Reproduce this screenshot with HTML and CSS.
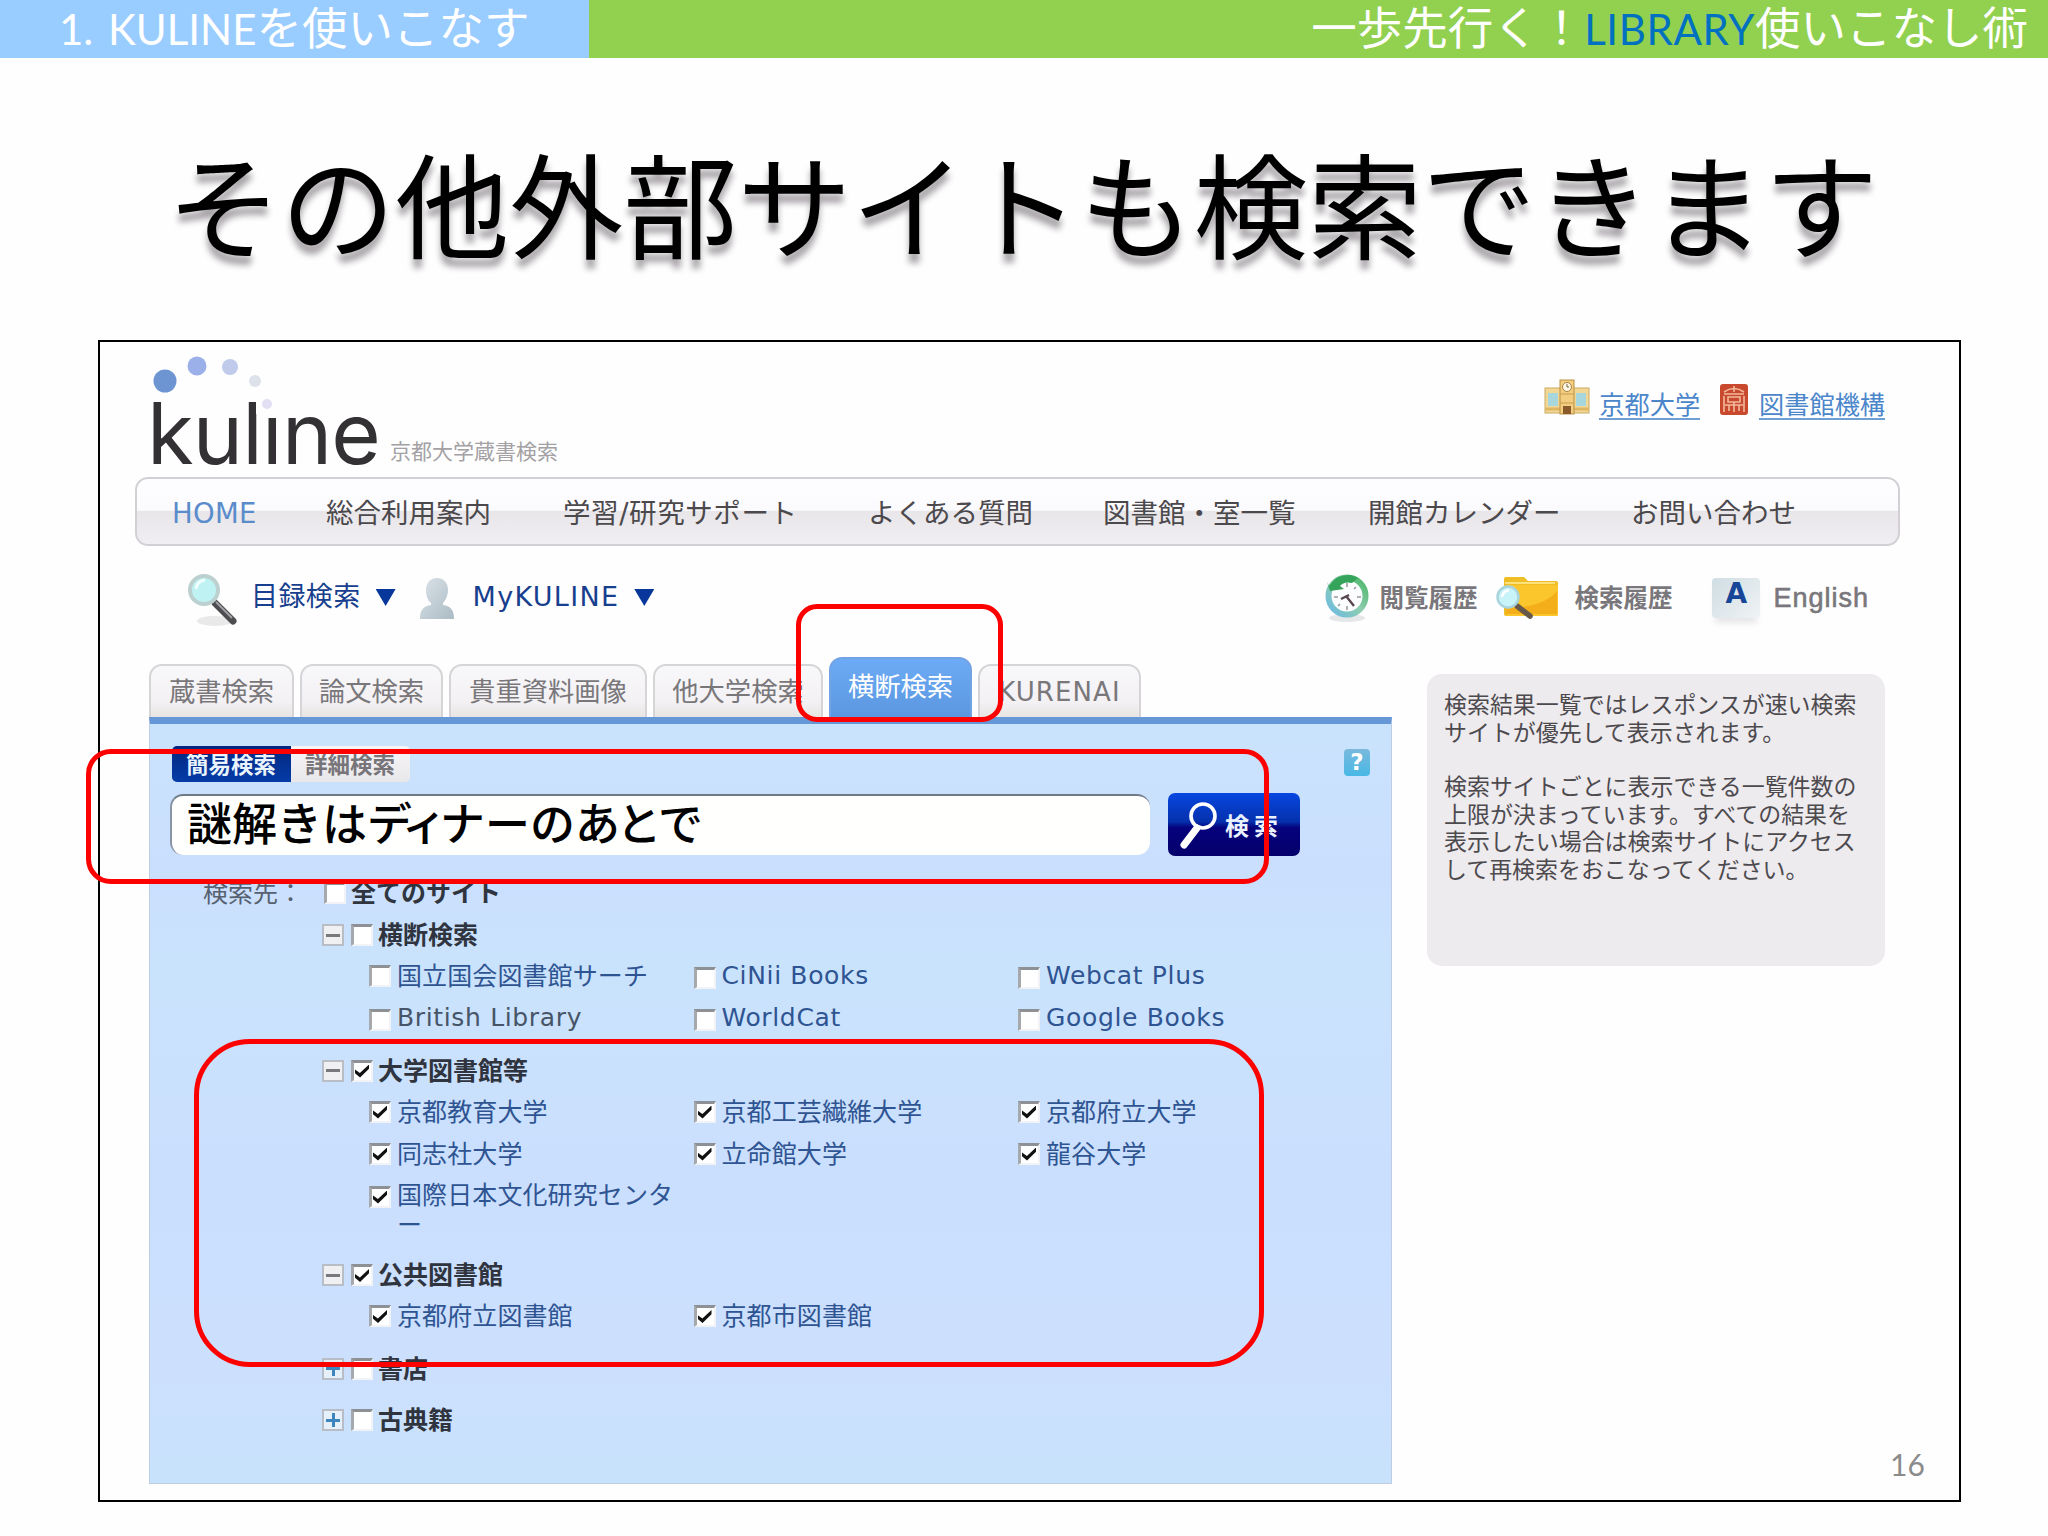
FILE: index.html
```html
<!DOCTYPE html>
<html lang="ja">
<head>
<meta charset="utf-8">
<title>KULINEを使いこなす</title>
<link rel="stylesheet" href="styles.css">
</head>
<body>
<div class="slide">
  <header class="bar">
    <div class="bar-chapter"><span class="latin chapter-latin">1. KULINE</span>を使いこなす</div>
    <div class="bar-series">一歩先行く！<span class="latin series-latin">LIBRARY</span>使いこなし術</div>
  </header>
  <h1 class="title">その他外部サイトも検索できます</h1>

  <main class="frame">
    <div class="brand">
      <div class="logo">
        <span class="logo-text">kuline</span>
        <svg class="logo-dots" width="134" height="70" viewBox="0 0 134 70">
          <rect x="104" y="36" width="28" height="24" fill="#fefefe"/>
          <circle cx="13" cy="27" r="11.5" fill="#6c95d2"/>
          <circle cx="45" cy="12" r="9.5" fill="#9bb0e8"/>
          <circle cx="78" cy="13" r="8" fill="#c0cbec"/>
          <circle cx="103" cy="27" r="6" fill="#dde1ea"/>
          <circle cx="115" cy="50" r="5" fill="#e2dff4"/>
        </svg>
      </div>
      <span class="tagline">京都大学蔵書検索</span>
      <div class="links">
        <svg width="46" height="36" viewBox="0 0 46 36">
          <rect x="1" y="9" width="44" height="25" fill="#f2d795" stroke="#c9a963"/>
          <rect x="4" y="14" width="10" height="13" fill="#a7d7dc"/><rect x="32" y="14" width="10" height="13" fill="#a7d7dc"/>
          <path d="M1 30h44" stroke="#dfb764" stroke-width="3"/>
          <rect x="16" y="1" width="14" height="34" fill="#f3cd80" stroke="#b98f45"/>
          <circle cx="23" cy="8" r="4.500" fill="#fff8e2" stroke="#a98445"/><path d="M23 5v3h2" stroke="#765" fill="none"/>
          <path d="M16 15h14M16 24h14" stroke="#c99c50"/><rect x="19" y="27" width="8" height="8" fill="#8b5a2b"/>
        </svg>
        <a class="link-univ">京都大学</a>
        <svg class="seal" width="28" height="31" viewBox="0 0 28 31">
          <rect width="28" height="31" rx="3" fill="#c9492f"/>
          <path d="M4 8q10-7 20 0M14 2v6M4 10h20M8 13h12v5H8zM5 21h18M14 18v10M9 21v6M19 21v6M4 12v16M24 12v16" fill="none" stroke="#f3b99c" stroke-width="1.600"/>
        </svg>
        <a>図書館機構</a>
      </div>
    </div>

    <nav class="nav">
      <span class="current">HOME</span><span>総合利用案内</span><span class="support">学習/研究サポート</span><span>よくある質問</span><span>図書館・室一覧</span><span>開館カレンダー</span><span>お問い合わせ</span>
    </nav>

    <div class="tools">
      <svg class="ic-search" width="50" height="56" viewBox="0 0 50 56">
        <ellipse cx="28" cy="50" rx="18" ry="5" fill="#e9e9ea"/>
        <path d="M28 32L46 50" stroke="#4d4d50" stroke-width="7" stroke-linecap="round"/><path d="M29 31L45 47" stroke="#a2a2a6" stroke-width="2"/>
        <circle cx="17" cy="19" r="14" fill="#bff2f2" stroke="#bcd0cf" stroke-width="4"/><path d="M9 18q1-8 9-9" stroke="#effffe" stroke-width="3" fill="none"/>
      </svg>
      <span class="tool-link t-catalog">目録検索</span><i class="tri"></i>
      <svg class="ic-user" width="36" height="44" viewBox="0 0 36 44">
        <defs><linearGradient id="person" x1="0" y1="0" x2="1" y2="1"><stop offset="0" stop-color="#dbe3e8"/><stop offset="1" stop-color="#abbbc4"/></linearGradient></defs>
        <path d="M18 1c7 0 11 5 11 12 0 6-3 11-5 13v2c7 1 11 4 11 14H1c0-10 4-13 11-14v-2C9 24 7 19 7 13 7 6 11 1 18 1z" fill="url(#person)"/>
      </svg>
      <span class="tool-link t-my">MyKULINE</span><i class="tri"></i>

      <div class="history">
        <svg class="ic-clock" width="46" height="50" viewBox="0 0 46 50">
          <defs><linearGradient id="ring" x1="1" y1="0" x2="0" y2="1"><stop offset="0" stop-color="#49b565"/><stop offset=".5" stop-color="#8fceb0"/><stop offset="1" stop-color="#6ab9e4"/></linearGradient></defs>
          <ellipse cx="23" cy="44" rx="18" ry="4" fill="#e5e7e9"/>
          <circle cx="23" cy="22" r="18.5" fill="#fbfdff" stroke="url(#ring)" stroke-width="6"/>
          <path d="M5 12Q12 0 27 1l7 3-6 5q-8-2-12 3l4 3-14 2-3-9z" fill="#35a35a"/>
          <path d="M23 9v4M23 32v4M10 23h4M33 23h4M14 32l2-2M32 13l-2 2" stroke="#999" stroke-width="1.500"/>
          <path d="M17 25l8-4M22 22l8 10" fill="none" stroke="#5b4750" stroke-width="2.400"/>
        </svg>
        <span class="h-view">閲覧履歴</span>
        <svg class="ic-folder" width="64" height="46" viewBox="0 0 64 46">
          <path d="M9 3q0-2 2-2h18l4 4h28q2 0 2 2v31q0 2-2 2H11q-2 0-2-2z" fill="#efbd25"/>
          <path d="M11 9h52v29q0 2-2 2H11z" fill="#fbc62c"/><path d="M11 32Q48 32 62 15v23H11z" fill="#f3ae19"/><path d="M10 7h50" stroke="#fde27b" stroke-width="2"/>
          <path d="M22 30l13 10" stroke="#66584b" stroke-width="5.500" stroke-linecap="round"/>
          <circle cx="13" cy="21" r="10.5" fill="#c8f3f8" stroke="#a9d4dd" stroke-width="2.500"/><path d="M7 21q1-6 7-7" stroke="#fff" stroke-width="2.500" fill="none"/>
        </svg>
        <span class="h-search">検索履歴</span>
        <span class="lang-icon">A</span>
        <span class="h-lang">English</span>
      </div>
    </div>

    <div class="columns">
      <section class="search">
        <div class="tabs">
          <span class="tab tab-1">蔵書検索</span><span class="tab tab-2">論文検索</span><span class="tab tab-3">貴重資料画像</span><span class="tab tab-4">他大学検索</span><span class="tab tab-5 active">横断検索</span><span class="tab tab-6">KURENAI</span>
        </div>
        <div class="panel">
          <div class="modes">
            <span class="mode on">簡易検索</span><span class="mode">詳細検索</span><span class="help">?</span>
          </div>
          <div class="query">
            <div class="field">謎解きは<span class="narrow">ディ</span>ナーの<span class="tight">あと</span>で</div>
            <div class="submit">
              <svg width="40" height="50" viewBox="0 0 40 50"><circle cx="25" cy="15" r="12" fill="none" stroke="#fff" stroke-width="3.600"/><path d="M19 27L6 44" stroke="#fff" stroke-width="7" stroke-linecap="round"/></svg>
              <span>検索</span>
            </div>
          </div>

          <div class="targets">
            <div class="all"><span class="caption">検索先：</span><i class="box"></i><b>全てのサイト</b></div>
            <div class="group">
              <div class="head"><i class="fold minus"></i><i class="box"></i><b>横断検索</b></div>
              <div class="sites">
                <span><i class="box"></i>国立国会図書館サーチ</span><span class="en"><i class="box"></i>CiNii Books</span><span class="en"><i class="box"></i>Webcat Plus</span>
                <span class="en plain"><i class="box"></i>British Library</span><span class="en"><i class="box"></i>WorldCat</span><span class="en"><i class="box"></i>Google Books</span>
              </div>
            </div>
            <div class="group">
              <div class="head"><i class="fold minus"></i><i class="box checked"></i><b>大学図書館等</b></div>
              <div class="sites">
                <span><i class="box checked"></i>京都教育大学</span><span><i class="box checked"></i>京都工芸繊維大学</span><span><i class="box checked"></i>京都府立大学</span>
                <span><i class="box checked"></i>同志社大学</span><span><i class="box checked"></i>立命館大学</span><span><i class="box checked"></i>龍谷大学</span>
                <span class="long"><i class="box checked"></i><span>国際日本文化研究センタ<br>ー</span></span>
              </div>
            </div>
            <div class="group">
              <div class="head"><i class="fold minus"></i><i class="box checked"></i><b>公共図書館</b></div>
              <div class="sites">
                <span><i class="box checked"></i>京都府立図書館</span><span><i class="box checked"></i>京都市図書館</span>
              </div>
            </div>
            <div class="group"><div class="head"><i class="fold plus"></i><i class="box"></i><b>書店</b></div></div>
            <div class="group"><div class="head"><i class="fold plus"></i><i class="box"></i><b>古典籍</b></div></div>
          </div>
        </div>
      </section>

      <aside class="side">
        <div class="note">
          <p>検索結果一覧ではレスポンスが速い検索<br>サイトが優先して表示されます。</p>
          <p>検索サイトごとに表示できる一覧件数の<br>上限が決まっています。すべての結果を<br>表示したい場合は検索サイトにアクセス<br>して再検索をおこなってください。</p>
        </div>
        <span class="page-number">16</span>
      </aside>
    </div>
  </main>

  <div class="callout callout-tab"></div>
  <div class="callout callout-query"></div>
  <div class="callout callout-sites"></div>
</div>
</body>
</html>
```
FILE: styles.css
```css
* { box-sizing: border-box; }
body { margin: 0; }
i { font-style: normal; }

.slide {
  position: relative;
  width: 2048px;
  height: 1536px;
  overflow: hidden;
  background: #fefefe;
  font-family: "DejaVu Sans", "Noto Sans CJK JP", sans-serif;
  white-space: nowrap;
}

/* slide header */
.bar { display: flex; height: 58px; font: 400 45.500px/50px "Noto Sans CJK JP", sans-serif; color: #fff; }
.bar-chapter { width: 589px; padding-left: 59px; background: #99ccff; }
.bar-series { flex: 1; padding-right: 20px; background: #92d050; text-align: right; }
.latin { font-family: Lato, sans-serif; font-weight: 400; font-size: 42px; line-height: 46px; }
.chapter-latin { word-spacing: 4px; }
.series-latin { color: #0070c0; letter-spacing: .6px; }
.title {
  height: 282px;
  margin: 0;
  padding-left: 167px;
  font: 400 114.100px/286px "Noto Sans CJK JP", sans-serif;
  color: #000;
  text-shadow: 0 9px 6px rgba(40, 30, 40, .4);
}

/* captured site */
.frame { width: 1863px; height: 1162px; margin-left: 98px; border: 2px solid #000; }

.brand { display: flex; height: 135px; padding-left: 52px; }
.logo { position: relative; width: 238px; }
.logo-text { display: block; margin-left: -5px; font: 400 85px/100px Inter, sans-serif; letter-spacing: -.8px; color: #333134; padding-top: 42px; }
.logo-dots { position: absolute; left: 0; top: 12px; }
.tagline { margin-top: 96px; font-size: 21px; line-height: 28px; color: #a3a1a4; }
.links { display: flex; margin: 37px 0 0 auto; padding-right: 74px; font-size: 25.200px; line-height: 36px; color: #4b86cb; }
.links a { height: 41px; padding-top: 11px; line-height: 32px; border-bottom: 2px solid #6e9fd3; margin-left: 9px; }
.seal { margin: 5px 2px 0 20px; }

.nav {
  display: grid;
  grid-template-columns: 154px 237px 305px 235px 265px 263px auto;
  width: 1765px;
  height: 69px;
  margin-left: 35px;
  padding-left: 35px;
  border: 2px solid #d2d0d4;
  border-radius: 13px;
  background: linear-gradient(#fefdff 0, #fbfafd 48%, #e8e6e9 50%, #f0eef2 100%);
  font-size: 27.500px;
  line-height: 68px;
  color: #4c494d;
}
.nav .current { color: #5a8ccb; letter-spacing: .3px; }
.nav .support { letter-spacing: .6px; }

.tools { display: flex; height: 111px; padding-left: 87px; color: #173f8e; font-size: 27px; line-height: 101px; }
.tools svg { flex: none; }
.ic-search { margin-top: 25px; }
.t-catalog { margin-left: 14px; letter-spacing: .4px; }
.t-my { margin-left: 18px; letter-spacing: 1.300px; }
.tri { width: 20px; height: 17px; margin: 43px 0 0 15px; background: #08379b; clip-path: polygon(0 0, 100% 0, 50% 100%); }
.ic-user { margin: 31px 0 0 23px; }
.history { display: flex; margin-left: auto; padding-right: 90px; color: #79777b; font-weight: 700; font-size: 24.500px; line-height: 105px; }
.ic-clock { margin-top: 28px; }
.h-view { margin-left: 9px; }
.ic-folder { margin: 30px 0 0 18px; }
.h-search { margin-left: 15px; }
.lang-icon {
  width: 48px; height: 40px; margin: 32px 0 0 40px;
  border-radius: 4px; background: linear-gradient(135deg, #cfdde2, #f0f3f5);
  color: #174698; font: 700 28px/32px "DejaVu Sans", sans-serif; text-align: center;
  box-shadow: 0 8px 6px -3px #e6e6e8;
}
.h-lang { margin-left: 13px; font: 400 27px/105px "Liberation Sans", sans-serif; letter-spacing: 1px; -webkit-text-stroke: .6px #79777b; }

.columns { display: flex; padding-left: 49px; }
.search { width: 1243px; }
.tabs { display: flex; align-items: flex-end; gap: 6px; height: 60px; }
.tab {
  height: 53px;
  border: 2px solid #d6d4d6;
  border-bottom: 0;
  border-radius: 13px 13px 0 0;
  background: linear-gradient(#f8f7fa, #f3f1f4 70%, #e7e6e3);
  color: #79777a;
  font-size: 26.300px;
  line-height: 53px;
  text-align: center;
}
.tab-1 { width: 145px; }
.tab-2 { width: 143px; }
.tab-3 { width: 198px; }
.tab-4 { width: 170px; }
.tab-5 { width: 143px; }
.tab-6 { width: 163px; font-size: 26px; letter-spacing: 1.100px; }
.tab.active { height: 60px; border-color: #74a3e4; background: linear-gradient(#6dabf6, #5b97e0); color: #fff; line-height: 56px; }

.panel {
  height: 767px;
  padding: 22px 0 0 20px;
  border: 1px solid #bfcde2;
  border-top: 7px solid #6697d6;
  background: linear-gradient(#cae3fc, #cadffe 20%, #cae3fc 32%, #cadffe 60%, #cce0fe 85%, #c8e2fb);
}
.modes { display: flex; height: 36px; margin-left: 2px; }
.mode { width: 119px; height: 36px; padding-left: 14px; border-radius: 0 5px 5px 0; background: linear-gradient(#f7f5f8, #e8e7e9); color: #77757a; font-weight: 700; font-size: 22.500px; line-height: 38px; }
.mode.on { border-radius: 5px 0 0 5px; background: linear-gradient(#04277f, #053ca7); color: #e9f4ff; }
.help { width: 26px; height: 27px; margin: 3px 0 0 934px; border-radius: 4px; background: linear-gradient(#7ab9dd, #48b8e5); color: #fff; font: 700 23px/27px "DejaVu Sans", sans-serif; text-align: center; }

.query { display: flex; height: 63px; margin-top: 11px; }
.field {
  width: 980px; height: 61px; margin-top: 1px; padding-left: 15px;
  border-top: 2px solid #6f7b89; border-left: 2px solid #8994a5;
  border-radius: 13px; background: #fffffe;
  color: #000; font: 500 45px/51px "Noto Sans CJK JP", sans-serif;
}
.narrow { letter-spacing: -7px; }
.tight { letter-spacing: -3.500px; }
.submit { display: flex; width: 132px; height: 63px; margin-left: 18px; padding: 8px 0 0 10px; border-radius: 7px; background: linear-gradient(#0747e0, #0531ae 45%, #05027c 55%, #05006c); color: #eaf1ff; }
.submit span { margin-left: 7px; font-weight: 700; font-size: 24px; line-height: 53px; letter-spacing: 5px; }

.targets { padding-top: 14px; font-size: 25px; color: #2f5492; }
.targets b { color: #2f343f; }
.all, .head { display: flex; align-items: center; }
.all { height: 42px; }
.caption { width: 121px; margin-left: 33px; color: #57606f; }
.group { margin-bottom: 11.500px; }
.group:nth-child(2) { margin-top: 1px; }
.head { height: 40px; padding-left: 152px; }
.all .box, .head .box { margin-right: 5px; }
.sites { display: grid; grid-template-columns: repeat(3, 324.500px); grid-auto-rows: minmax(42px, auto); padding-left: 199px; }
.sites > span { display: flex; align-items: center; letter-spacing: .1px; }
.sites > .en { letter-spacing: .65px; padding-top: 3px; }
.sites .plain { color: #485467; }
.sites .long { height: 69px; align-items: flex-start; line-height: 30px; padding-top: 8px; }
.long .box { margin-top: 5px; }
.box { position: relative; flex: none; width: 22px; height: 22px; margin: 4px 6px 0 0; border: 2px solid #f1f3f6; border-top: 3px solid #8d9095; border-left: 3px solid #a5a9ad; background: #fff; }
.box.checked::after { content: ""; position: absolute; inset: 2px 2px 2px 1px; background: #111; clip-path: polygon(0 38%, 35% 66%, 100% 0, 100% 32%, 36% 100%, 0 68%); }
.fold { width: 22px; height: 22px; margin: 4px 7px 0 0; border: 2px solid #b9bec6; }
.fold.minus { background: linear-gradient(#77797d, #77797d) center / 14px 3px no-repeat, #f0f0f2; }
.fold.plus { background: linear-gradient(#3d86bd, #3d86bd) center / 14px 3px no-repeat, linear-gradient(#3d86bd, #3d86bd) center / 3px 14px no-repeat, #e5f0fa; }

.side { display: flex; flex-direction: column; width: 458px; margin: 17px 0 0 35px; }
.note { height: 292px; padding: 18px 17px; border-radius: 15px; background: #edebee; color: #4d4a4e; font-size: 22.950px; line-height: 27.500px; }
.note p { margin: 0 0 27px; }
.page-number { margin: 476px 0 0 463px; font: 400 30px/44px Lato, sans-serif; color: #8b8b8b; }

/* red emphasis outlines drawn over the capture */
.callout { position: absolute; border: 5.500px solid #fd0000; }
.callout-tab { left: 796px; top: 604px; width: 207px; height: 118px; border-radius: 21px; }
.callout-query { left: 86px; top: 749px; width: 1183px; height: 135px; border-radius: 25px; }
.callout-sites { left: 194px; top: 1039px; width: 1070px; height: 328px; border-radius: 56px; }
```
